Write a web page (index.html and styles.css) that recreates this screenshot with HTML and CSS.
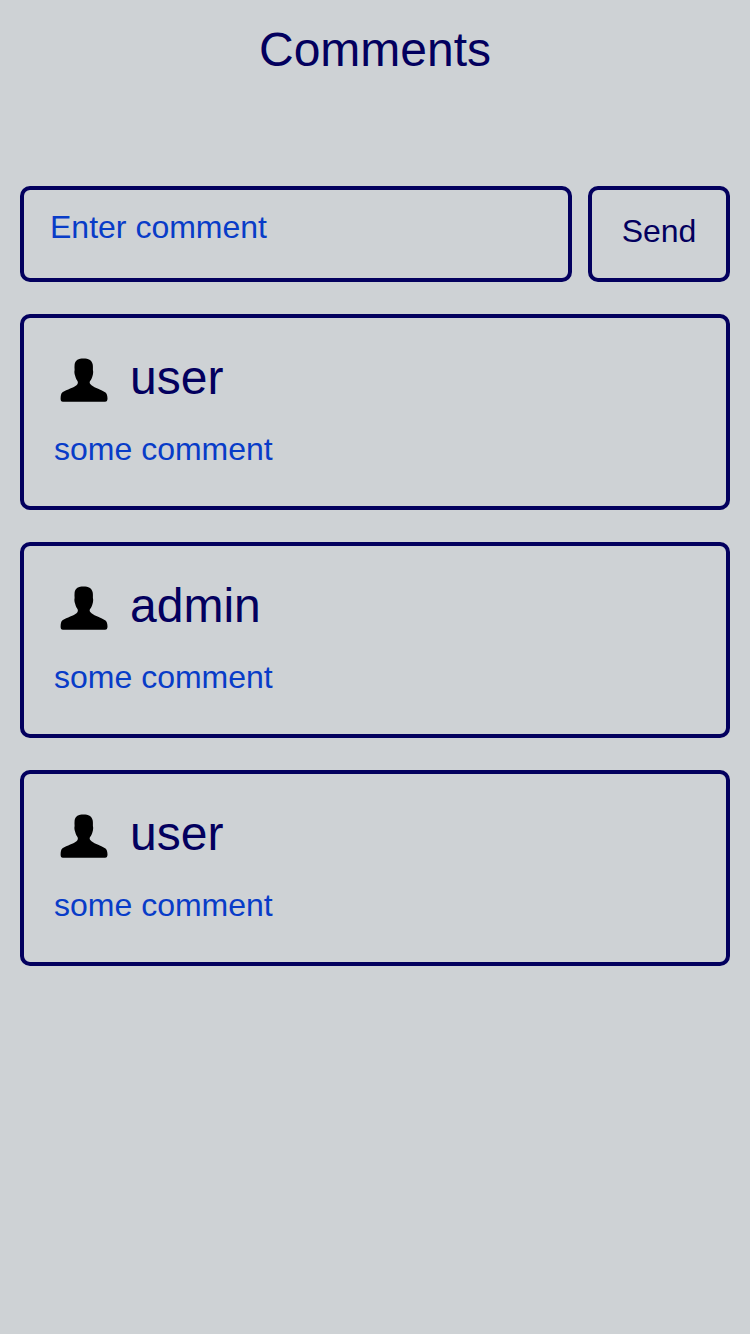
FILE: index.html
```html
<!DOCTYPE html>
<html lang="en">
<head>
<meta charset="utf-8">
<meta name="viewport" content="width=device-width, initial-scale=1">
<title>Comments</title>
<link rel="stylesheet" href="styles.css">
</head>
<body>
<svg class="icon-defs" aria-hidden="true">
  <symbol id="person" viewBox="0 0 60 60">
    <path d="M29.500 10.400C24.500 10.400 21.200 12 20.600 16.500C20.400 18.500 20.500 20 20.600 22C20.100 24 20.500 26 21.200 28C21.800 30.500 22.800 32 23.700 33.500C24.200 35.200 23.600 36.200 22.500 37.200C20 39.500 13 41.500 8.500 44.200C7 45.200 6.700 47.500 6.600 50.500C6.600 52.800 7.200 53.800 9 53.800H51C52.800 53.800 53.500 52.500 53.500 50.500C53.400 47.500 52.800 45.500 51.500 44.500C47 41.500 41 40 37.500 37.200C36 36 35.300 35 35.800 33.500C37 32 38 30 38.500 28C39.200 26 39.400 23.500 38.900 22C39 19.500 39 17.500 38.600 16C37.600 12 34.500 10.400 29.500 10.400Z"/>
  </symbol>
</svg>
<main class="page">
  <h1 class="title">Comments</h1>
  <form class="composer">
    <textarea class="composer-input" rows="1" placeholder="Enter comment" aria-label="Enter comment"></textarea>
    <button class="composer-send" type="button">Send</button>
  </form>
  <section class="comments">
    <article class="comment">
      <header class="comment-author">
        <svg class="avatar" aria-hidden="true"><use href="#person"/></svg>
        <h2 class="author-name">user</h2>
      </header>
      <p class="comment-text">some comment</p>
    </article>
    <article class="comment">
      <header class="comment-author">
        <svg class="avatar" aria-hidden="true"><use href="#person"/></svg>
        <h2 class="author-name">admin</h2>
      </header>
      <p class="comment-text">some comment</p>
    </article>
    <article class="comment">
      <header class="comment-author">
        <svg class="avatar" aria-hidden="true"><use href="#person"/></svg>
        <h2 class="author-name">user</h2>
      </header>
      <p class="comment-text">some comment</p>
    </article>
  </section>
</main>
</body>
</html>
```
FILE: styles.css
```css
:root {
  --navy: #03005e;
  --blue: #083cc8;
  --ground: #ced2d5;
}

* {
  box-sizing: border-box;
}

body {
  margin: 0;
  background: var(--ground);
  color: var(--navy);
  font-family: "Liberation Sans", Arial, sans-serif;
  font-size: 32px;
  line-height: 34px;
}

.icon-defs {
  display: none;
}

.page {
  padding: 20px;
}

.title,
.author-name {
  margin: 0;
  font-size: 48px;
  font-weight: 400;
  line-height: 60px;
}

.title {
  text-align: center;
}

.composer {
  display: flex;
  gap: 16px;
  margin: 106px 0 32px;
}

.composer-input,
.composer-send,
.comment {
  border: 4px solid var(--navy);
  border-radius: 10px;
  background: transparent;
}

.composer-input,
.composer-send {
  height: 96px;
  font: inherit;
}

.composer-input {
  flex: 1;
  min-width: 0;
  padding: 20px 26px;
  color: var(--blue);
  resize: none;
  overflow: auto;
}

.composer-input::placeholder {
  color: var(--blue);
  opacity: 1;
}

.composer-send {
  width: 142px;
  padding: 0 0 6px;
  color: var(--navy);
}

.comments {
  display: grid;
  gap: 32px;
}

.comment {
  padding: 30px 30px 40px;
}

.comment-author {
  display: flex;
  align-items: center;
  gap: 16px;
  margin-bottom: 24px;
}

.avatar {
  width: 60px;
  height: 60px;
}

.comment-text {
  margin: 0;
  color: var(--blue);
}
```
